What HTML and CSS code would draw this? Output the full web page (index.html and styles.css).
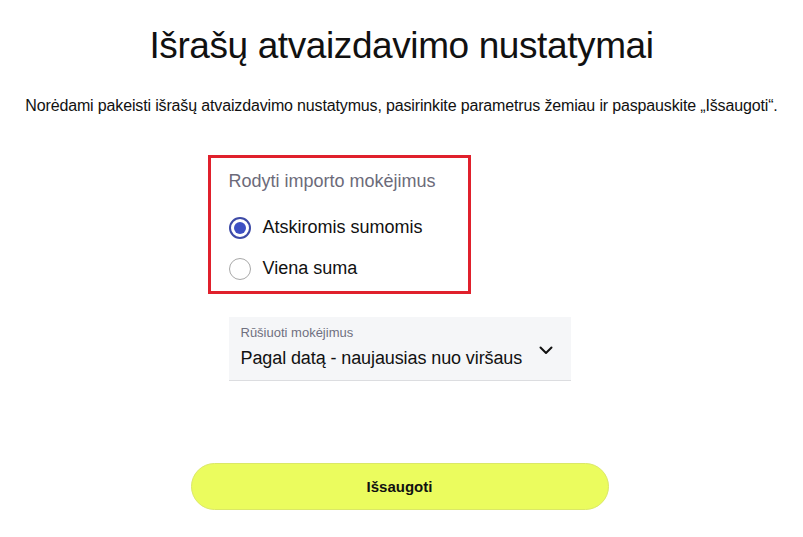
FILE: index.html
```html
<!DOCTYPE html>
<html lang="lt">
<head>
    <meta charset="UTF-8">
    <meta name="viewport" content="width=device-width, initial-scale=1.0">
    <title>Išrašų atvaizdavimo nustatymai</title>
    <link rel="stylesheet" href="styles.css">
</head>
<body>

    <main>
        <header>
            <h1>Išrašų atvaizdavimo nustatymai</h1>
            <p class="intro">Norėdami pakeisti išrašų atvaizdavimo nustatymus, pasirinkite parametrus žemiau ir paspauskite „Išsaugoti“.</p>
        </header>

        <form class="settings">
            <!-- Import payments option -->
            <div class="highlight">
                <fieldset class="radio-group">
                    <legend>Rodyti importo mokėjimus</legend>
                    <label class="radio-option">
                        <input type="radio" name="import" value="separate" checked>
                        <span class="radio-mark"></span>
                        Atskiromis sumomis
                    </label>
                    <label class="radio-option">
                        <input type="radio" name="import" value="single">
                        <span class="radio-mark"></span>
                        Viena suma
                    </label>
                </fieldset>
            </div>

            <!-- Sort select -->
            <div class="select-field">
                <span class="select-label">Rūšiuoti mokėjimus</span>
                <span class="select-value">Pagal datą - naujausias nuo viršaus</span>
                <svg class="chevron" width="14" height="9" viewBox="0 0 14 9" fill="none">
                    <path d="M1.5 1.5 L7 7 L12.5 1.5" stroke="#111" stroke-width="2" stroke-linecap="round" stroke-linejoin="round"/>
                </svg>
            </div>

            <div class="button-container">
                <button type="button" class="save-button">Išsaugoti</button>
            </div>
        </form>
    </main>

</body>
</html>
```

FILE: styles.css
```css
/* General Body Styling */
body {
    font-family: "Liberation Sans", Arial, sans-serif;
    background-color: #fff;
    color: #111;
    margin: 0;
}

/* Header Styling */
header {
    text-align: center;
}

h1 {
    font-size: 37px;
    font-weight: normal;
    letter-spacing: -0.4px;
    margin: 0;
    padding-top: 24px;
    line-height: 44px;
}

.intro {
    font-size: 16px;
    letter-spacing: -0.15px;
    margin: 28px 0 0;
    line-height: 20px;
}

/* Form Column */
.settings {
    width: 342px;
    margin: 0 auto 0 calc(50% - 173px);
}

/* Red highlight round the radio group */
.highlight {
    display: inline-block;
    border: 3px solid #e0202c;
    margin: 39px 0 0 -21px;
    padding: 12px 32px 2px 18px;
}

.radio-group {
    border: none;
    margin: 0;
    padding: 0;
}

.radio-group legend {
    padding: 0;
    font-size: 18px;
    color: #6c6b7a;
    line-height: 22px;
    margin-bottom: 15px;
}

.radio-option {
    display: flex;
    align-items: center;
    gap: 12px;
    font-size: 18px;
    height: 41px;
    cursor: pointer;
}

.radio-option input {
    display: none;
}

.radio-mark {
    width: 22px;
    height: 22px;
    border: 1.5px solid #a8a8a8;
    border-radius: 50%;
    box-sizing: border-box;
    display: flex;
    align-items: center;
    justify-content: center;
}

.radio-option input:checked + .radio-mark {
    border: 2px solid #3d4aa6;
}

.radio-option input:checked + .radio-mark::after {
    content: "";
    width: 12px;
    height: 12px;
    border-radius: 50%;
    background-color: #3d50c3;
}

/* Select Field */
.select-field {
    position: relative;
    margin-top: 23px;
    background-color: #f5f6f8;
    border-bottom: 1px solid #dcdde0;
    height: 64px;
    padding: 8px 12px 0;
    box-sizing: border-box;
    display: flex;
    flex-direction: column;
}

.select-label {
    font-size: 13px;
    color: #707080;
    line-height: 16px;
}

.select-value {
    font-size: 18px;
    line-height: 22px;
    margin-top: 6px;
    letter-spacing: -0.1px;
}

.chevron {
    position: absolute;
    right: 18px;
    top: 29px;
}

/* Button Styling */
.button-container {
    display: flex;
    justify-content: center;
    margin-top: 82px;
}

.save-button {
    width: 418px;
    height: 47px;
    flex-shrink: 0;
    background-color: #ebfc5e;
    border: 1px solid #dbe867;
    border-radius: 24px;
    font-family: "Liberation Sans", Arial, sans-serif;
    font-size: 15px;
    font-weight: bold;
    color: #111;
    cursor: pointer;
}
```
